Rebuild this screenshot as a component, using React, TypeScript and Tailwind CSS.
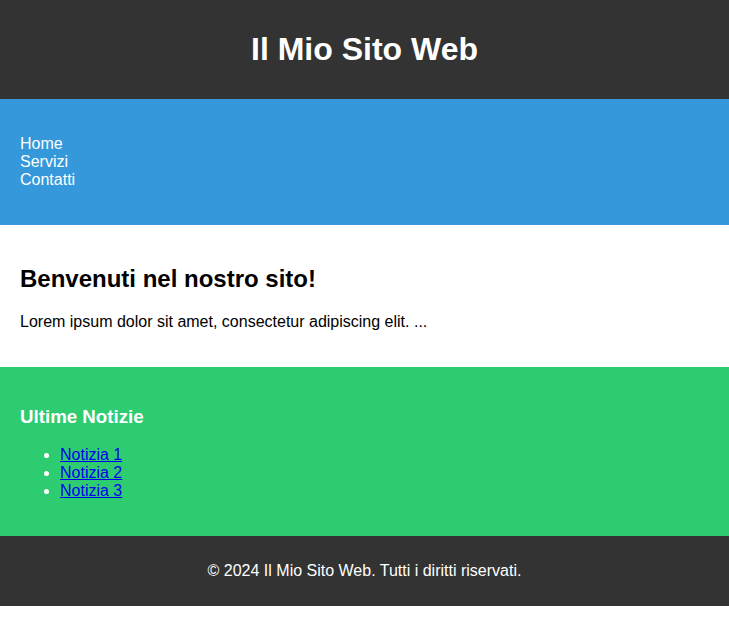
export default function App() {
  return (
    <div className="font-['Liberation_Sans',Arial,sans-serif] text-base leading-[normal] text-black bg-white">
      {/* Header */}
      <header className="bg-[#333333] p-[10px] text-center text-white">
        <h1 className="my-[21px] text-[32px] font-bold leading-[normal]">Il Mio Sito Web</h1>
      </header>

      {/* Nav */}
      <nav className="bg-[#3498db] p-[20px]">
        <ul className="my-4 text-white">
          <li>Home</li>
          <li>Servizi</li>
          <li>Contatti</li>
        </ul>
      </nav>

      {/* Main */}
      <main className="p-[20px]">
        <h2 className="my-[19.92px] text-[24px] font-bold leading-[normal]">Benvenuti nel nostro sito!</h2>
        <p className="my-4">Lorem ipsum dolor sit amet, consectetur adipiscing elit. ...</p>
      </main>

      {/* Notizie */}
      <section className="bg-[#2ecc71] p-[20px] text-white">
        <h3 className="my-[18.72px] text-[18.72px] font-bold leading-[normal]">Ultime Notizie</h3>
        <ul className="my-4 list-disc pl-10">
          <li>
            <a href="#" className="text-[#0000ee] underline">Notizia 1</a>
          </li>
          <li>
            <a href="#" className="text-[#0000ee] underline">Notizia 2</a>
          </li>
          <li>
            <a href="#" className="text-[#0000ee] underline">Notizia 3</a>
          </li>
        </ul>
      </section>

      {/* Footer */}
      <footer className="bg-[#333333] p-[10px] text-center text-white">
        <p className="my-4">© 2024 Il Mio Sito Web. Tutti i diritti riservati.</p>
      </footer>
    </div>
  );
}
